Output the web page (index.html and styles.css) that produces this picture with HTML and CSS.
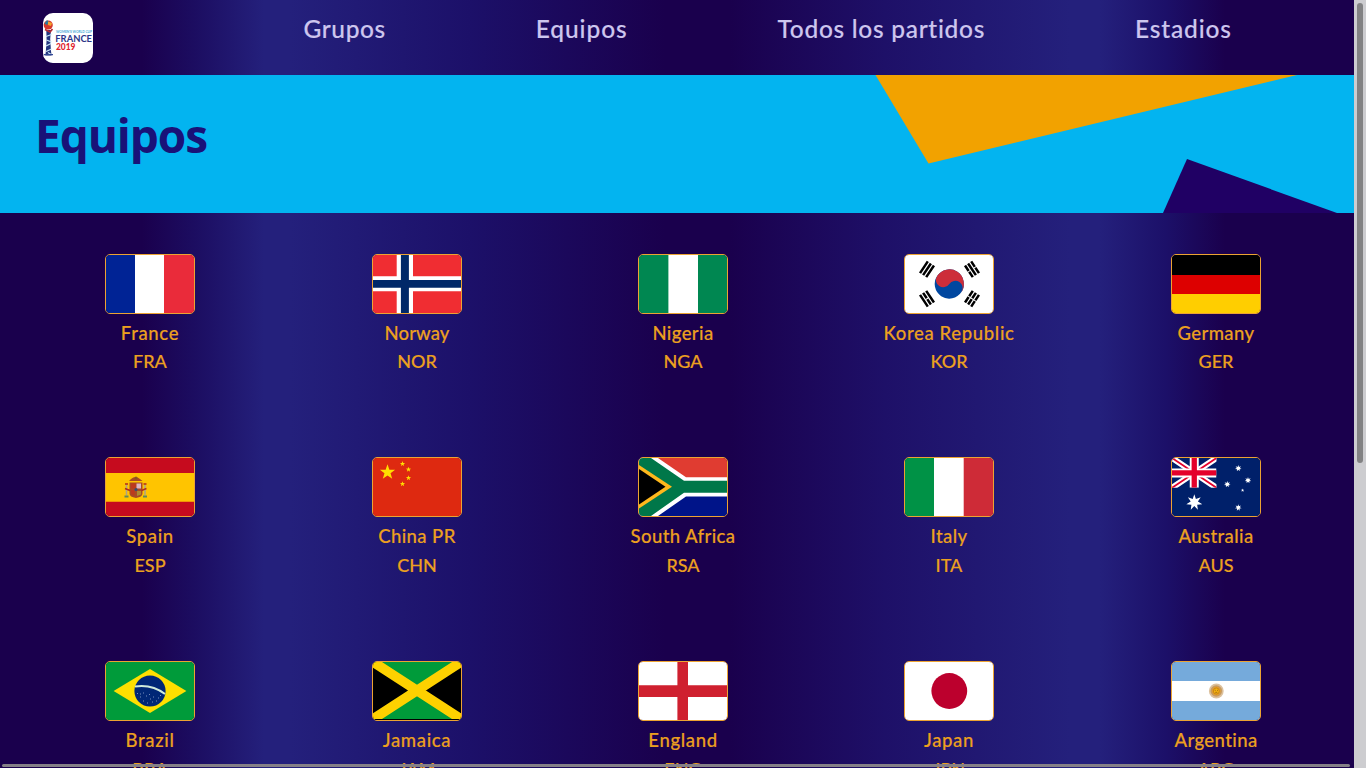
FILE: index.html
```html
<!DOCTYPE html>
<html lang="es">
<head>
<meta charset="utf-8">
<title>Equipos</title>
<link rel="stylesheet" href="styles.css">
</head>
<body>
<svg class="defs" aria-hidden="true">
  <symbol id="star5" viewBox="-10 -10 20 20" overflow="visible"><path d="M0-10 2.35-3.24 9.51-3.09 3.8 1.24 5.88 8.09 0 4-5.88 8.09-3.8 1.24-9.51-3.09-2.35-3.24z"/></symbol>
  <symbol id="star7" viewBox="-10 -10 20 20" overflow="visible"><path d="M0-10 1.95-4.05 7.82-6.23 4.39-1 9.75 2.23 3.52 2.81 4.34 9.01 0 4.5-4.34 9.01-3.52 2.81-9.75 2.23-4.39-1-7.82-6.23-1.95-4.05z"/></symbol>
</svg>
<div class="page">
  <header class="header">
    <a class="logo">
      <svg viewBox="0 0 50 50">
        <path d="M3.300 17h4.700l-.8 9 .8 12 1.800 13H1l1.800-12 .8-12z" fill="#24357f"/>
        <circle cx="5.200" cy="12" r="4.600" fill="#d8372b"/>
        <path d="M1.500 10.500 4 7l2 2-2 3z" fill="#257a9e"/>
        <path d="M5 8.500 9 10l-1 3-3-1z" fill="#f1a12e"/>
        <path d="M2 16.500 7 19l2.500-3" stroke="#b52b34" stroke-width="1.800" fill="none"/>
        <path d="M3 23.500 8.500 21.500M3.500 27l5 2M3 33l5-2.500M3 38.500l5.500-2.500M5 39.500l4 2.500" stroke="#c9e7f7" stroke-width="1.300"/>
        <path fill="#fff" d="M0 42.500h12V50H0z"/>
        <path d="M1 41h9v1.300H1z" fill="#344a96"/>
        <text class="logo-cup" x="13" y="20" textLength="36" lengthAdjust="spacingAndGlyphs">WOMEN'S WORLD CUP</text>
        <text class="logo-country" x="12.300" y="28.500" textLength="36.700" lengthAdjust="spacingAndGlyphs">FRANCE</text>
        <text class="logo-year" x="13" y="37" textLength="19.500" lengthAdjust="spacingAndGlyphs">2019</text>
      </svg>
    </a>
    <nav class="nav">
      <a class="nav-grupos">Grupos</a>
      <a class="nav-equipos">Equipos</a>
      <a class="nav-partidos">Todos los partidos</a>
      <a class="nav-estadios">Estadios</a>
    </nav>
  </header>

  <section class="banner">
    <svg class="banner-art" viewBox="0 0 1354 138" preserveAspectRatio="none">
      <path d="M875.500 0H1297L928.500 88.500z" fill="#f2a200"/>
      <path d="M1163 138 1187 84 1337 138z" fill="#200064"/>
    </svg>
    <h1>Equipos</h1>
  </section>

  <main class="teams">
    <article class="team">
      <svg class="flag" viewBox="0 0 88 58"><path fill="#fff" d="M20 0h48v58H20z"/><path fill="#002395" d="M0 0h29v58H0z"/><path fill="#ea2b3a" d="M58 0h30v58H58z"/></svg>
      <h2 class="wide">France</h2><p>FRA</p>
    </article>
    <article class="team">
      <svg class="flag" viewBox="0 0 88 58"><path fill="#f02d32" d="M0 0h88v58H0z"/><path fill="#fff" d="M23.700 0h16.300v58H23.700zM0 21.300h88v15H0z"/><path fill="#002868" d="M27.900 0h8v58h-8zM0 25h88v7.700H0z"/></svg>
      <h2 class="tight">Norway</h2><p>NOR</p>
    </article>
    <article class="team">
      <svg class="flag" viewBox="0 0 88 58"><path fill="#008751" d="M0 0h88v58H0z"/><path fill="#fff" d="M29.400 0H59v58H29.400z"/></svg>
      <h2>Nigeria</h2><p>NGA</p>
    </article>
    <article class="team">
      <svg class="flag" viewBox="0 0 88 58"><path fill="#fff" d="M0 0h88v58H0z"/>
        <g transform="translate(44.300 29) rotate(33.700)"><circle r="14.600" fill="#0047a0"/><path fill="#cd2e3a" d="M-14.600 0A14.600 14.600 0 0 1 14.600 0 7.300 7.300 0 0 0 0 0 7.300 7.300 0 0 1-14.600 0z"/></g>
        <g stroke="#000" stroke-width="2.500">
          <path transform="translate(22 14.300) rotate(33.700)" d="M-3.700-7V7M0-7V7M3.700-7V7"/>
          <path transform="translate(67 14.300) rotate(-33.700)" d="M-3.700-7v6.500M-3.700.5V7M0-7V7M3.700-7v6.500M3.700.5V7"/>
          <path transform="translate(22 43.700) rotate(-33.700)" d="M-3.700-7V7M0-7v6.500M0 .5V7M3.700-7V7"/>
          <path transform="translate(67 43.700) rotate(33.700)" d="M-3.700-7v6.500M-3.700.5V7M0-7v6.500M0 .5V7M3.700-7v6.500M3.700.5V7"/>
        </g></svg>
      <h2 class="wide">Korea Republic</h2><p>KOR</p>
    </article>
    <article class="team">
      <svg class="flag" viewBox="0 0 88 58"><path d="M0 0h88v20H0z"/><path fill="#d00" d="M0 20h88v19H0z"/><path fill="#ffce00" d="M0 39h88v19H0z"/></svg>
      <h2>Germany</h2><p>GER</p>
    </article>

    <article class="team">
      <svg class="flag" viewBox="0 0 88 58"><path fill="#c60b1e" d="M0 0h88v58H0z"/><path fill="#ffc400" d="M0 15h88v28.700H0z"/>
        <path fill="#a84b24" d="M25 21q4.500-4 9 0l2.500 2H23zM23.500 24.500h13v11q0 3.500-6.500 4.500-6.500-1-6.500-4.500z"/>
        <path fill="#dcb6c1" d="M30.500 25.500h4.500v5h-4.500z"/><path fill="#bd3a1d" d="M25 25.500h5v5h-5zM25 32h3.500v5.500L25 36z"/><path fill="#ad8c30" d="M31 33h4v3.500l-4 1.500z"/><circle cx="30" cy="31.500" r="1.500" fill="#354d77"/><path d="M30 18.500v3M28.500 20h3" stroke="#785e20"/>
        <path d="M20.500 27v10M39 27v10" stroke="#a9a48a" stroke-width="1.500"/><path d="M19 30.500l5 2M40.500 30.500l-5 2M19 26h3M37.500 26h3" stroke="#ad2a20" stroke-width="1.500"/><path d="M18.500 38.500h4M37 38.500h4" stroke="#5d8760" stroke-width="1.800"/></svg>
      <h2 class="wide">Spain</h2><p>ESP</p>
    </article>
    <article class="team">
      <svg class="flag" viewBox="0 0 88 58"><path fill="#de2910" d="M0 0h88v58H0z"/>
        <g fill="#ffde00"><use href="#star5" x="6.500" y="6.300" width="16" height="16"/><use href="#star5" x="26.700" y="3" width="5.600" height="5.600"/><use href="#star5" x="32.700" y="8.700" width="5.600" height="5.600"/><use href="#star5" x="32.700" y="17.200" width="5.600" height="5.600"/><use href="#star5" x="26.700" y="23.200" width="5.600" height="5.600"/></g></svg>
      <h2>China PR</h2><p>CHN</p>
    </article>
    <article class="team">
      <svg class="flag" viewBox="0 0 88 58"><path fill="#e03c31" d="M0 0h88v29H0z"/><path fill="#001489" d="M0 29h88v29H0z"/><path fill="#fff" d="M0 0h19l28 19.300h41v19.200H47L19 58H0z"/><path fill="#007749" d="M0 0h12l33 22.800h43v11.900H45L12 58H0z"/><path fill="#ffb81c" d="M0 7 33 28.700 0 50.500z"/><path d="M0 11 26.500 28.700 0 46.500z"/></svg>
      <h2>South Africa</h2><p>RSA</p>
    </article>
    <article class="team">
      <svg class="flag" viewBox="0 0 88 58"><path fill="#fff" d="M20 0h48v58H20z"/><path fill="#009246" d="M0 0h29v58H0z"/><path fill="#ce2b37" d="M58.700 0H88v58H58.700z"/></svg>
      <h2>Italy</h2><p>ITA</p>
    </article>
    <article class="team">
      <svg class="flag" viewBox="0 0 88 58"><path fill="#00206a" d="M0 0h88v58H0z"/>
        <svg width="44.500" height="29.800" viewBox="0 0 44.500 29.800"><path d="M0 0 44.500 29.800M44.500 0 0 29.800" stroke="#fff" stroke-width="6"/><path d="M0 0 44.500 29.800M44.500 0 0 29.800" stroke="#e4002b" stroke-width="1.800"/><path d="M22.250 0v29.800M0 14.900h44.500" stroke="#fff" stroke-width="9"/><path d="M22.250 0v29.800M0 14.900h44.500" stroke="#e4002b" stroke-width="5.300"/></svg>
        <g fill="#fff"><use href="#star7" x="14.100" y="36.200" width="16.400" height="16.400"/><use href="#star7" x="62.900" y="6.900" width="6.800" height="6.800"/><use href="#star7" x="72.600" y="18.900" width="6.800" height="6.800"/><use href="#star7" x="51.900" y="22.900" width="6.800" height="6.800"/><use href="#star7" x="62.900" y="46.200" width="6.800" height="6.800"/><use href="#star5" x="68.800" y="30.500" width="3.600" height="3.600"/></g></svg>
      <h2>Australia</h2><p>AUS</p>
    </article>

    <article class="team">
      <svg class="flag" viewBox="0 0 88 58"><path fill="#009b3a" d="M0 0h88v58H0z"/><path fill="#fedf00" d="M7.600 29 44 7l36.400 22L44 51z"/><circle cx="44" cy="29" r="15.600" fill="#002776"/><path d="M29 24.500Q46 22 59 32" fill="none" stroke="#cfeadb" stroke-width="2"/>
        <path d="M31 31.500h1M34 35h1M37 31h1M40 34h1M43 32.500h1M47 35h1M52 36h1M54 33.500h1M37 39h1M41 41h1M46 40h1M50 39h1M44 37h1M34 32h1" stroke="#a9bbdc" stroke-width=".7"/></svg>
      <h2 class="wide">Brazil</h2><p>BRA</p>
    </article>
    <article class="team">
      <svg class="flag" viewBox="0 0 88 58"><path d="M0 0h88v58H0z"/><path fill="#009b3a" d="M0 0h88L44 28.500zM0 57h88L44 28.500z"/><svg width="88" height="57"><path d="M-3-2 91 59M91-2-3 59" stroke="#fed100" stroke-width="9.700"/></svg></svg>
      <h2 class="wide">Jamaica</h2><p>JAM</p>
    </article>
    <article class="team">
      <svg class="flag" viewBox="0 0 88 58"><path fill="#fff" d="M0 0h88v58H0z"/><path fill="#cf202f" d="M38.400 0H49v58H38.400zM0 23.300h88V35H0z"/></svg>
      <h2 class="wide">England</h2><p>ENG</p>
    </article>
    <article class="team">
      <svg class="flag" viewBox="0 0 88 58"><path fill="#fff" d="M0 0h88v58H0z"/><circle cx="44.300" cy="29" r="17.900" fill="#bc002d"/></svg>
      <h2 class="wide">Japan</h2><p>JPN</p>
    </article>
    <article class="team">
      <svg class="flag" viewBox="0 0 88 58"><path fill="#fff" d="M0 10h88v38H0z"/><path fill="#75aadb" d="M0 0h88v19H0zM0 39h88v19H0z"/><circle cx="44.300" cy="29" r="7.400" fill="#dcc19e"/><circle cx="44.300" cy="29" r="5.800" fill="#c79a5f"/><circle cx="44.300" cy="29" r="4.200" fill="#e89d20"/><circle cx="44.300" cy="29" r="3" fill="#f6b40e" stroke="#b87719" stroke-width=".7"/><path d="M42.700 28.300h1M45 28.300h1M43.300 30.300h2" stroke="#85501b" stroke-width=".7"/></svg>
      <h2>Argentina</h2><p>ARG</p>
    </article>
  </main>
</div>
<div class="scroll-x"></div>
<div class="scroll-y"><div class="thumb"></div></div>
</body>
</html>
```
FILE: styles.css
```css
* { box-sizing: border-box; }
body {
  margin: 0;
  width: 1366px;
  height: 768px;
  overflow: hidden;
  display: flex;
  font-family: Lato, "Open Sans", sans-serif;
  font-variant-ligatures: none;
}
.defs { position: absolute; width: 0; height: 0; }
.page {
  width: 1354px;
  height: 768px;
  overflow: hidden;
  background: linear-gradient(90deg, #1a004d 0, #1a004d 142px, #1c0d61 195px, #24207c 264px, #24207c 290px, #1c1069 470px, #1a004d 665px, #1a004d 730px, #1e1068 885px, #24207c 1070px, #24207c 1100px, #1c1069 1165px, #1a004d 1225px);
}
.header { height: 75px; display: flex; }
.logo {
  width: 50px;
  height: 50px;
  margin: 13px 0 0 43px;
  border-radius: 10px;
  background: #fff;
  overflow: hidden;
}
.logo svg { display: block; width: 50px; height: 50px; }
.logo-cup { font-size: 3.4px; font-weight: 700; fill: #48a9d6; }
.logo-country { font: 700 10px Lato, sans-serif; fill: #2b3688; }
.logo-year { font: 900 10px Lato, sans-serif; fill: #df242e; }
.nav {
  margin-left: 210.500px;
  display: flex;
  gap: 150px;
  padding-top: 14px;
  color: #cdc6ee;
  font-size: 24.500px;
  font-weight: 500;
  line-height: 30px;
  white-space: nowrap;
  -webkit-text-stroke: .15px #cdc6ee;
}
.nav-grupos { letter-spacing: .6px; }
.nav-equipos { letter-spacing: .9px; }
.nav-partidos { letter-spacing: .7px; }
.nav-estadios { letter-spacing: .85px; }
.banner {
  position: relative;
  height: 138px;
  padding: 28px 0 0 35px;
  background: #03b4f0;
}
.banner-art { position: absolute; left: 0; top: 0; width: 1354px; height: 138px; }
.banner h1 {
  position: relative;
  margin: 0;
  font: 700 46px/64px "Open Sans", "Noto Sans", sans-serif;
  letter-spacing: -1.100px;
  color: #191278;
}
.teams {
  margin: 0 5px 0 17px;
  padding-top: 41px;
  display: grid;
  grid-template-columns: 266px 268px 264px 268px 266px;
  grid-template-rows: 203px 204px 204px;
}
.team {
  display: flex;
  flex-direction: column;
  align-items: center;
  color: #eca01f;
  text-align: center;
}
.flag {
  width: 90px;
  height: 60px;
  flex: none;
  border: 1px solid #eca332;
  border-radius: 5px;
  overflow: hidden;
}
.team h2, .team p {
  margin: 0;
  font-size: 18px;
  font-weight: 500;
  line-height: 28px;
  -webkit-text-stroke: .15px #eca01f;
}
.team h2 { margin-top: 5px; font-size: 18.500px; letter-spacing: .4px; }
.team h2.wide { letter-spacing: .65px; }
.team h2.tight { letter-spacing: .1px; }
.team:nth-child(n+6) p { line-height: 30px; }
.scroll-x {
  position: absolute;
  left: 2px;
  top: 764px;
  width: 1348px;
  height: 3px;
  border-radius: 2px;
  background: #858087;
}
.scroll-y { width: 12px; height: 768px; padding: 3px; background: #cdcdd0; }
.thumb { width: 6px; height: 460px; border-radius: 3px; background: #828283; }
```
